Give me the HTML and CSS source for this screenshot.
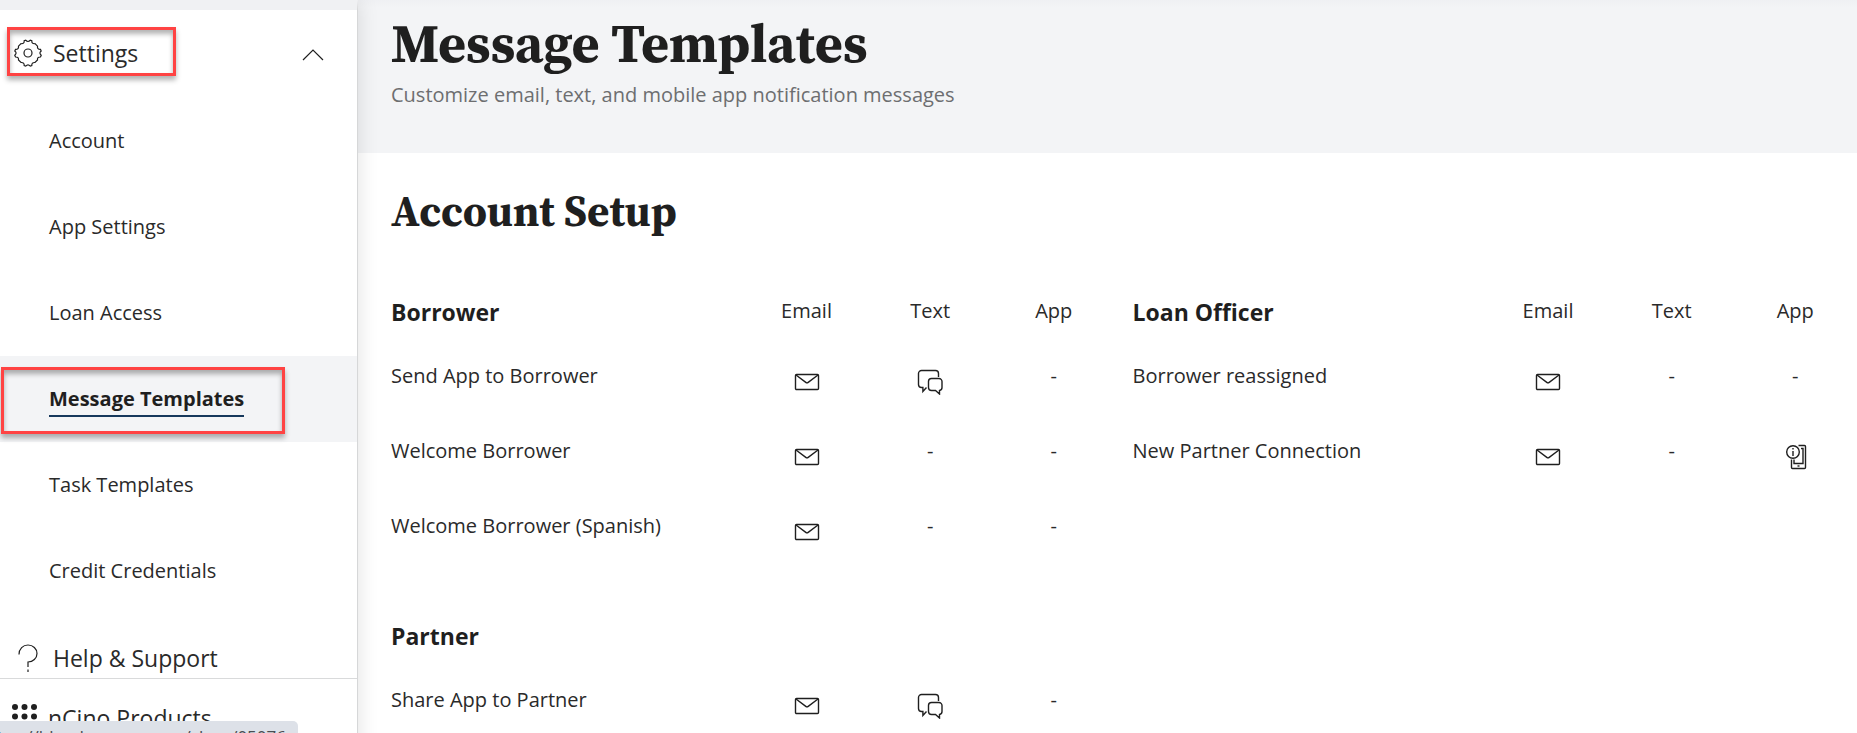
FILE: index.html
```html
<!DOCTYPE html>
<html lang="en">
<head>
    <meta charset="UTF-8">
    <meta name="viewport" content="width=device-width, initial-scale=1.0">
    <title>Message Templates</title>
    <link rel="stylesheet" href="styles.css">
</head>
<body>
    <!-- Shared icons -->
    <svg class="icon-defs" aria-hidden="true">
        <symbol id="icon-mail" viewBox="0 0 26 26">
            <rect x="1.5" y="5.5" width="23" height="15" rx="1"/>
            <path d="M2 6l9.8 7.4q1.2.9 2.4 0L24 6"/>
        </symbol>
        <symbol id="icon-chat" viewBox="0 0 26 26">
            <path d="M9.500 18.500l-3.600 4v-4H4.500a3 3 0 0 1-3-3v-11a3 3 0 0 1 3-3h14a3 3 0 0 1 3 3V8"/>
            <path d="M14.500 9.500h7.500a3 3 0 0 1 3 3v6a3 3 0 0 1-2.500 3v3.500l-4-3.500h-4a3 3 0 0 1-3-3v-6a3 3 0 0 1 3-3z"/>
        </symbol>
        <symbol id="icon-phone" viewBox="0 0 26 26">
            <path d="M16.500 1.500H22.500a1 1 0 0 1 1 1v21a1 1 0 0 1-1 1h-12a1 1 0 0 1-1-1V15.500"/>
            <path d="M19 4.500h2v15h-9V15.500"/>
            <path d="M15.500 22h2"/>
            <circle cx="11" cy="8" r="6.300"/>
            <path d="M11 7v5M11 4v1.500"/>
        </symbol>
    </svg>

    <div class="page">
        <nav class="sidebar">
            <button class="menu-toggle">
                <svg class="menu-icon" viewBox="0 0 28 28">
                    <path d="M11.700 1.200q2.300 2.600 4.600 0l1.500.5q-.2 3.400 3.200 3l2.500 2.500q-.4 3.400 3 3.200l.7 1.600q-2.600 2 0 4.300l-.7 1.700q-3.400-.2-3 3l-2.500 2.500q-3.400-.3-3.200 3l-1.500.6q-2.300-2.600-4.600 0l-1.500-.6q.2-3.300-3.200-3L4.500 21q.4-3.200-3-3l-.7-1.700q2.600-2.300 0-4.300l.7-1.600q3.400.2 3-3.200L7 4.700q3.400.4 3.200-3z"/>
                    <circle cx="14" cy="14" r="4"/>
                </svg>
                <span>Settings</span>
                <svg class="chevron" viewBox="0 0 22 12"><path d="M1 11L11 1l10 10"/></svg>
            </button>
            <ul class="menu">
                <li><a href="#">Account</a></li>
                <li><a href="#">App Settings</a></li>
                <li><a href="#">Loan Access</a></li>
                <li class="active"><a href="#"><span>Message Templates</span></a></li>
                <li><a href="#">Task Templates</a></li>
                <li><a href="#">Credit Credentials</a></li>
            </ul>
            <a class="help" href="#">
                <svg class="menu-icon" viewBox="0 0 28 28">
                    <path d="M5 10.500C5 4.800 9 1 14 1s9 3.800 9 8.500-4 8.500-9 8.500v5M14 25.500V28"/>
                </svg>
                <span>Help &amp; Support</span>
            </a>
            <a class="products" href="#">
                <svg class="dots" viewBox="0 0 25 25">
                    <circle cx="3" cy="3" r="3"/><circle cx="12.500" cy="3" r="3"/><circle cx="22" cy="3" r="3"/>
                    <circle cx="3" cy="12.500" r="3"/><circle cx="12.500" cy="12.500" r="3"/><circle cx="22" cy="12.500" r="3"/>
                    <circle cx="3" cy="22" r="3"/><circle cx="12.500" cy="22" r="3"/><circle cx="22" cy="22" r="3"/>
                </svg>
                <span>nCino Products</span>
            </a>
            <div class="highlight highlight-settings"></div>
            <div class="highlight highlight-templates"></div>
        </nav>

        <main class="content">
            <header class="page-header">
                <h1>Message Templates</h1>
                <p>Customize email, text, and mobile app notification messages</p>
            </header>
            <section class="setup">
                <h2>Account Setup</h2>
                <div class="groups">
                    <table class="group">
                        <thead>
                            <tr><th>Borrower</th><td>Email</td><td>Text</td><td>App</td></tr>
                        </thead>
                        <tbody>
                            <tr>
                                <td>Send App to Borrower</td>
                                <td><button aria-label="Email"><svg><use href="#icon-mail"/></svg></button></td>
                                <td><button aria-label="Text"><svg><use href="#icon-chat"/></svg></button></td>
                                <td>-</td>
                            </tr>
                            <tr>
                                <td>Welcome Borrower</td>
                                <td><button aria-label="Email"><svg><use href="#icon-mail"/></svg></button></td>
                                <td>-</td>
                                <td>-</td>
                            </tr>
                            <tr>
                                <td>Welcome Borrower (Spanish)</td>
                                <td><button aria-label="Email"><svg><use href="#icon-mail"/></svg></button></td>
                                <td>-</td>
                                <td>-</td>
                            </tr>
                        </tbody>
                    </table>
                    <table class="group">
                        <thead>
                            <tr><th>Loan Officer</th><td>Email</td><td>Text</td><td>App</td></tr>
                        </thead>
                        <tbody>
                            <tr>
                                <td>Borrower reassigned</td>
                                <td><button aria-label="Email"><svg><use href="#icon-mail"/></svg></button></td>
                                <td>-</td>
                                <td>-</td>
                            </tr>
                            <tr>
                                <td>New Partner Connection</td>
                                <td><button aria-label="Email"><svg><use href="#icon-mail"/></svg></button></td>
                                <td>-</td>
                                <td><button aria-label="App"><svg><use href="#icon-phone"/></svg></button></td>
                            </tr>
                        </tbody>
                    </table>
                    <table class="group">
                        <thead>
                            <tr><th>Partner</th><td></td><td></td><td></td></tr>
                        </thead>
                        <tbody>
                            <tr>
                                <td>Share App to Partner</td>
                                <td><button aria-label="Email"><svg><use href="#icon-mail"/></svg></button></td>
                                <td><button aria-label="Text"><svg><use href="#icon-chat"/></svg></button></td>
                                <td>-</td>
                            </tr>
                        </tbody>
                    </table>
                </div>
            </section>
        </main>
    </div>

    <div class="status-bar"><span>https://blend.servers.com/close/05076</span></div>
</body>
</html>
```
FILE: styles.css
```css
* {
    box-sizing: border-box;
}
html, body {
    height: 100%;
}
body {
    margin: 0;
    font-family: "Open Sans", "Noto Sans", sans-serif;
    font-size: 20px;
    line-height: 28px;
    color: #2a2a2a;
    background-color: #ffffff;
    overflow: hidden;
}
a {
    color: inherit;
    text-decoration: none;
}
button {
    font: inherit;
    color: inherit;
    background: none;
    border: none;
    padding: 0;
    cursor: pointer;
}
svg {
    fill: none;
    stroke: #1f1f1f;
    stroke-width: 1.2;
}
.icon-defs {
    position: absolute;
    width: 0;
    height: 0;
}
.page {
    display: flex;
    min-height: 100%;
}

/* Sidebar */
.sidebar {
    position: relative;
    flex: 0 0 358px;
    border-top: 10px solid #f0f1f3;
    border-right: 1px solid #d6d7d8;
    box-shadow: 0 0 20px rgba(0, 0, 0, 0.12);
    background-color: #ffffff;
    z-index: 1;
}
.menu-toggle, .help {
    display: flex;
    align-items: center;
    width: 100%;
    height: 88px;
    padding: 0 33px 0 14px;
    font-size: 23px;
    text-align: left;
}
.menu-toggle {
    padding-bottom: 3px;
}
.menu-icon {
    width: 28px;
    height: 28px;
    margin-right: 11px;
}
.chevron {
    width: 22px;
    height: 12px;
    margin-top: 5px;
    margin-left: auto;
}
.menu {
    list-style: none;
    margin: 0;
    padding: 0;
}
.menu a {
    display: flex;
    align-items: center;
    height: 86px;
    padding-left: 49px;
}
.menu .active {
    background-color: #f3f4f6;
    color: #1f1f1f;
    font-weight: bold;
}
.menu .active span {
    border-bottom: 2px solid #16385c;
    padding: 4px 0 2px;
}
.help {
    height: 64px;
    padding-top: 24px;
}
.products {
    display: flex;
    align-items: flex-start;
    height: 70px;
    padding: 25px 12px 0;
    border-top: 1px solid #d9dadb;
    font-size: 23px;
}
.dots {
    width: 25px;
    height: 25px;
    margin-right: 11px;
    fill: #1f1f1f;
    stroke: none;
}

/* Red callouts over the menu */
.highlight {
    position: absolute;
    border: 3px solid #ff4343;
    box-shadow: 0 4px 5px rgba(0, 0, 0, 0.3), inset 0 4px 5px rgba(0, 0, 0, 0.3);
    pointer-events: none;
}
.highlight-settings {
    top: 17px;
    left: 7px;
    width: 169px;
    height: 49px;
}
.highlight-templates {
    top: 357px;
    left: 1px;
    width: 284px;
    height: 67px;
}

/* Main content */
.content {
    flex: 1;
    min-width: 0;
}
h1, h2 {
    font-family: "Source Serif Pro", "Source Serif 4", "Liberation Serif", serif;
    font-weight: bold;
    color: #1f1f1f;
    margin: 0;
}
.page-header {
    height: 153px;
    padding: 11px 33px 0;
    background: linear-gradient(#eff0f3, #f3f4f6 8px);
}
.page-header h1 {
    font-size: 54px;
    line-height: 64px;
}
.page-header p {
    margin: 6px 0 0;
    color: #6d6e70;
}
.setup {
    padding: 26px 0 0 16px;
}
.setup h2 {
    padding-left: 17px;
    font-size: 43px;
    line-height: 64px;
}
.groups {
    display: grid;
    grid-template-columns: 1fr 1fr;
    align-items: start;
    row-gap: 34px;
    margin-top: 54px;
}
.group {
    width: 100%;
    table-layout: fixed;
    border-collapse: collapse;
}
.group th, .group td {
    padding: 0;
    height: 75px;
    text-align: center;
    vertical-align: top;
}
.group thead th, .group thead td {
    height: 65px;
}
.group th {
    color: #1f1f1f;
    font-size: 23px;
    line-height: 30px;
}
.group tr > :first-child {
    width: 50%;
    padding-left: 17px;
    text-align: left;
}
.group button {
    display: block;
    width: 26px;
    height: 26px;
    margin: 7px auto 0;
}
.group button svg {
    display: block;
    width: 26px;
    height: 26px;
    stroke-width: 1.4;
}

/* Browser link preview */
.status-bar {
    position: fixed;
    left: 0;
    bottom: 0;
    display: flex;
    justify-content: flex-end;
    width: 298px;
    height: 12px;
    padding: 6px 12px 0 0;
    overflow: hidden;
    z-index: 2;
    border-top-right-radius: 5px;
    background-color: #dde1e8;
    color: #4a4d52;
    font-size: 17px;
    line-height: 20px;
    white-space: nowrap;
}
```
